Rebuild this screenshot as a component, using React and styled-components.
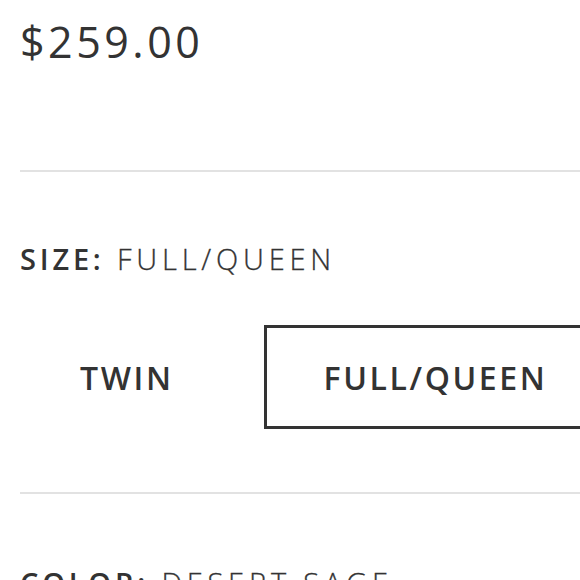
import React from 'react';
import styled, { createGlobalStyle } from 'styled-components';

const Global = createGlobalStyle`
  html, body {
    margin: 0;
    padding: 0;
    background: #fff;
    overflow: hidden;
  }
`;

const Page = styled.div`
  font-family: "Open Sans", "Noto Sans", sans-serif;
  color: #333;
  width: 640px;
  padding: 20px 0 0 20px;
`;

const Price = styled.div`
  font-size: 43px;
  line-height: 43px;
  letter-spacing: 3.5px;
`;

const Divider = styled.hr`
  border: none;
  height: 2px;
  background: #e2e2e2;
  margin: ${(p) => p.$top}px 0 0 0;
`;

const Label = styled.div`
  font-size: 29px;
  line-height: 28px;
  font-weight: 300;
  letter-spacing: 4.8px;
  margin-top: ${(p) => p.$top}px;
  white-space: nowrap;
  -webkit-text-stroke: 0.3px #333;

  b {
    font-weight: 600;
    letter-spacing: 3.8px;
    -webkit-text-stroke: 0;
  }
`;

const Options = styled.div`
  display: flex;
  gap: 30px;
  margin-top: 52px;
`;

const Option = styled.button`
  font-family: inherit;
  color: #333;
  background: transparent;
  font-size: 32px;
  font-weight: 600;
  letter-spacing: 2.6px;
  height: 104px;
  padding: 0 57px;
  border: 3px solid ${(p) => (p.$active ? '#333' : 'transparent')};
  white-space: nowrap;
  cursor: pointer;
`;

const sizes = ['TWIN', 'FULL/QUEEN'];

const App = () => {
  return (
    <Page>
      <Global />
      <Price>$259.00</Price>
      <Divider $top={107} />
      <Label $top={73}>
        <b>SIZE:</b> FULL/QUEEN
      </Label>
      <Options>
        {sizes.map((s) => (
          <Option key={s} $active={s === 'FULL/QUEEN'}>
            {s}
          </Option>
        ))}
      </Options>
      <Divider $top={63} />
      <Label $top={75}>
        <b>COLOR:</b> DESERT SAGE
      </Label>
    </Page>
  );
};

export default App;
